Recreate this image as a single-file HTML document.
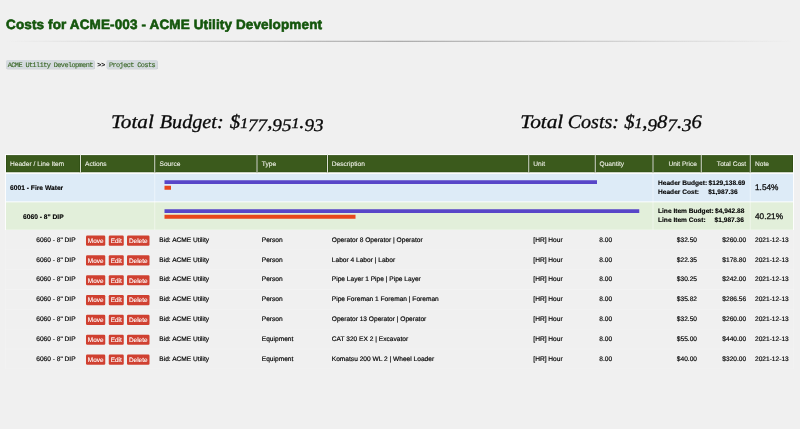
<!DOCTYPE html>
<html><head><meta charset="utf-8"><title>Costs</title>
<style>
html,body{margin:0;padding:0;}
body{width:800px;height:429px;overflow:hidden;background:#f0f0f0;font-family:"Liberation Sans",sans-serif;position:relative;text-rendering:geometricPrecision;will-change:transform;}
.a{position:absolute;white-space:nowrap;}
.t{font-size:26.4px;line-height:40px;color:#000;-webkit-text-stroke:0.72px #000;}
.th{font-size:26.4px;line-height:40px;color:#eef1e6;-webkit-text-stroke:0.4px #eef1e6;}
.b{font-weight:bold;font-size:26.72px;color:#000;-webkit-text-stroke:0.48px #000;}
.bb{font-size:26.4px;}
.r{text-align:right;}
.btn{position:absolute;height:40.8px;border-radius:4.8px;background:#d04030;color:#fff;font-size:25.6px;line-height:43.2px;text-align:center;-webkit-text-stroke:0.4px #fff;}
.crumb{position:absolute;top:240px;height:34.8px;background:#d5dadf;border-radius:6px;box-shadow:1.2px 1.6px 1.2px #b4b8bc;font-family:"Liberation Mono",monospace;font-size:27.6px;letter-spacing:-2.4px;line-height:34.8px;color:#3a6727;text-align:center;-webkit-text-stroke:0.56px #3a6727;}
.crumb span{position:relative;top:4.4px;}
.big{font-family:"Liberation Serif",serif;font-style:italic;color:#0a0a0a;line-height:96px;-webkit-text-stroke:1.32px #0a0a0a;}
.dx{font-size:0.75em;-webkit-text-stroke:1.6px #0a0a0a;}
.dd{position:relative;top:12.4px;font-size:0.92em;}
#wrap{position:absolute;left:0;top:0;width:3200px;height:1716px;transform:scale(0.25);transform-origin:0 0;}
</style></head><body><div id="wrap">
<div class="a" id="title" style="left:24px;top:61.6px;font-size:54px;line-height:72px;font-weight:bold;color:#14560c;-webkit-text-stroke:2.4px #14560c;letter-spacing:0.52px;">Costs for ACME-003 - ACME Utility Development</div>
<div class="a" style="left:24px;top:160px;width:3148px;height:4px;background:linear-gradient(to right,rgba(150,150,150,0),rgba(150,150,150,0.22) 50%,rgba(150,150,150,0));"></div>
<div class="a" style="left:24px;top:164px;width:3148px;height:4px;background:linear-gradient(to right,rgba(150,150,150,0),rgba(150,150,150,0.75) 50%,rgba(150,150,150,0));"></div>
<div class="crumb" style="left:24px;width:354px;"><span>ACME Utility Development</span></div>
<div class="a" style="left:389.2px;top:241.2px;font-size:27.6px;line-height:36px;color:#111;font-weight:bold;">&gt;&gt;</div>
<div class="crumb" style="left:426px;width:204px;"><span>Project Costs</span></div>

<div class="a big" id="w1" style="left:444.48px;top:437.2px;font-size:77.2px;transform:scaleX(1.0986);transform-origin:0 50%;">Total</div>
<div class="a big" id="w2" style="left:638.64px;top:437.2px;font-size:77.2px;transform:scaleX(1.0455);transform-origin:0 50%;">Budget:</div>
<div class="a big" id="w3" style="left:918.6px;top:437.2px;font-size:77.2px;transform:scaleX(1.0789);transform-origin:0 50%;">$<span class="dx">1</span><span class="dd">7</span><span class="dd">7</span>,<span class="dd">9</span><span class="dd">5</span><span class="dx">1</span>.<span class="dd">9</span><span class="dd">3</span></div>
<div class="a big" id="w4" style="left:2080.64px;top:437.2px;font-size:77.2px;transform:scaleX(1.1042);transform-origin:0 50%;">Total</div>
<div class="a big" id="w5" style="left:2271.36px;top:437.2px;font-size:77.2px;transform:scaleX(1.0374);transform-origin:0 50%;">Costs:</div>
<div class="a big" id="w6" style="left:2496.64px;top:437.2px;font-size:77.2px;transform:scaleX(1.072);transform-origin:0 50%;">$<span class="dx">1</span>,<span class="dd">9</span>8<span class="dd">7</span>.<span class="dd">3</span>6</div>
<div class="a" style="left:20px;top:616px;width:3156px;height:304px;background:#fdfdfd;"></div>
<div class="a" style="left:24px;top:621px;width:3148px;height:68px;background:#3b5a1c;box-shadow:inset 0 0 0 2.4px #2b4810;"></div>
<div class="a" style="left:318px;top:621px;width:8px;height:68px;background:#2b4810;"></div>
<div class="a" style="left:320px;top:618px;width:4px;height:75.2px;background:#dbe0d3;"></div>
<div class="a" style="left:615.2px;top:621px;width:8px;height:68px;background:#2b4810;"></div>
<div class="a" style="left:617.2px;top:618px;width:4px;height:75.2px;background:#dbe0d3;"></div>
<div class="a" style="left:1024px;top:621px;width:8px;height:68px;background:#2b4810;"></div>
<div class="a" style="left:1026px;top:618px;width:4px;height:75.2px;background:#dbe0d3;"></div>
<div class="a" style="left:1306px;top:621px;width:8px;height:68px;background:#2b4810;"></div>
<div class="a" style="left:1308px;top:618px;width:4px;height:75.2px;background:#dbe0d3;"></div>
<div class="a" style="left:2111.2px;top:621px;width:8px;height:68px;background:#2b4810;"></div>
<div class="a" style="left:2113.2px;top:618px;width:4px;height:75.2px;background:#dbe0d3;"></div>
<div class="a" style="left:2377.2px;top:621px;width:8px;height:68px;background:#2b4810;"></div>
<div class="a" style="left:2379.2px;top:618px;width:4px;height:75.2px;background:#dbe0d3;"></div>
<div class="a" style="left:2608px;top:621px;width:8px;height:68px;background:#2b4810;"></div>
<div class="a" style="left:2610px;top:618px;width:4px;height:75.2px;background:#dbe0d3;"></div>
<div class="a" style="left:2801.2px;top:621px;width:8px;height:68px;background:#2b4810;"></div>
<div class="a" style="left:2803.2px;top:618px;width:4px;height:75.2px;background:#dbe0d3;"></div>
<div class="a" style="left:2997.2px;top:621px;width:8px;height:68px;background:#2b4810;"></div>
<div class="a" style="left:2999.2px;top:618px;width:4px;height:75.2px;background:#dbe0d3;"></div>
<div class="a th" style="left:40px;top:633.4px;">Header / Line Item</div>
<div class="a th" style="left:340px;top:633.4px;">Actions</div>
<div class="a th" style="left:638px;top:633.4px;">Source</div>
<div class="a th" style="left:1047.2px;top:633.4px;">Type</div>
<div class="a th" style="left:1327.2px;top:633.4px;">Description</div>
<div class="a th" style="left:2133.2px;top:633.4px;">Unit</div>
<div class="a th" style="left:2398px;top:633.4px;">Quantity</div>
<div class="a th r" style="left:2548px;width:240px;top:633.4px;">Unit Price</div>
<div class="a th r" style="left:2744.8px;width:240px;top:633.4px;">Total Cost</div>
<div class="a th" style="left:3020px;top:633.4px;">Note</div>
<div class="a" style="left:24px;top:696px;width:3148px;height:110px;background:#ddebf7;"></div>
<div class="a" style="left:24px;top:808.8px;width:3148px;height:110.4px;background:#e2efda;"></div>
<div class="a t b" style="left:40px;top:728.8px;">6001 - Fire Water</div>
<div class="a t b" style="left:92px;top:844.8px;">6060 - 8" DIP</div>
<div class="a" style="left:617.2px;top:696px;width:4px;height:223.2px;background:rgba(255,255,255,0.45);"></div>
<div class="a" style="left:2610px;top:696px;width:4px;height:223.2px;background:rgba(255,255,255,0.45);"></div>
<div class="a" style="left:2999.2px;top:696px;width:4px;height:223.2px;background:rgba(255,255,255,0.45);"></div>
<div class="a" style="left:24px;top:805.6px;width:3148px;height:3.2px;background:rgba(255,255,255,0.5);"></div>
<div class="a" style="left:657.6px;top:720.8px;width:1730.4px;height:15.6px;background:#5846c8;"></div>
<div class="a" style="left:657.6px;top:743.2px;width:26.4px;height:16px;background:#e8471c;"></div>
<div class="a" style="left:657.6px;top:836.8px;width:1899.2px;height:15.6px;background:#5846c8;"></div>
<div class="a" style="left:657.6px;top:859.2px;width:764.4px;height:16px;background:#e8471c;"></div>
<div class="a t b bb" style="left:2632px;top:708.8px;">Header Budget:</div><div class="a t b bb" style="left:2834.4px;top:708.8px;">$129,138.69</div>
<div class="a t b bb" style="left:2632px;top:745.6px;">Header Cost:</div><div class="a t b bb" style="left:2832.8px;top:745.6px;">$1,987.36</div>
<div class="a t b bb" style="left:2632px;top:823.2px;">Line Item Budget:</div><div class="a t b bb" style="left:2860px;top:823.2px;">$4,942.88</div>
<div class="a t b bb" style="left:2632px;top:860.2px;">Line Item Cost:</div><div class="a t b bb" style="left:2858.4px;top:860.2px;">$1,987.36</div>
<div class="a" style="left:3020px;top:723.4px;font-size:33px;line-height:48px;color:#111;-webkit-text-stroke:1.2px #111;">1.54%</div>
<div class="a" style="left:3020px;top:842px;font-size:33px;line-height:48px;color:#111;-webkit-text-stroke:1.2px #111;">40.21%</div>
<div class="a" style="left:20.8px;top:997.72px;width:3154.4px;height:3.2px;background:rgba(255,255,255,0.2);"></div>
<div class="a" style="left:20.8px;top:1077.04px;width:3154.4px;height:3.2px;background:rgba(255,255,255,0.2);"></div>
<div class="a" style="left:20.8px;top:1156.36px;width:3154.4px;height:3.2px;background:rgba(255,255,255,0.2);"></div>
<div class="a" style="left:20.8px;top:1235.68px;width:3154.4px;height:3.2px;background:rgba(255,255,255,0.2);"></div>
<div class="a" style="left:20.8px;top:1315px;width:3154.4px;height:3.2px;background:rgba(255,255,255,0.2);"></div>
<div class="a" style="left:20.8px;top:1394.32px;width:3154.4px;height:3.2px;background:rgba(255,255,255,0.2);"></div>
<div class="a" style="left:20.8px;top:1473.64px;width:3154.4px;height:3.2px;background:rgba(255,255,255,0.2);"></div>
<div class="a" style="left:20.8px;top:920px;width:3.2px;height:555.2px;background:rgba(255,255,255,0.2);"></div>
<div class="a" style="left:3172px;top:920px;width:3.2px;height:555.2px;background:rgba(255,255,255,0.2);"></div>
<div class="a t r" style="left:24px;width:278.4px;top:937.2px;">6060 - 8" DIP</div>
<div class="btn" style="left:344px;width:77.2px;top:942px;">Move</div>
<div class="btn" style="left:434.8px;width:60px;top:942px;">Edit</div>
<div class="btn" style="left:508px;width:90px;top:942px;">Delete</div>
<div class="a t" style="left:637.2px;top:937.2px;">Bid: ACME Utility</div>
<div class="a t" style="left:1047.2px;top:937.2px;">Person</div>
<div class="a t" style="left:1327.2px;top:937.2px;">Operator 8 Operator | Operator</div>
<div class="a t" style="left:2133.2px;top:937.2px;">[HR] Hour</div>
<div class="a t" style="left:2397.2px;top:937.2px;">8.00</div>
<div class="a t r" style="left:2548px;width:240px;top:937.2px;">$32.50</div>
<div class="a t r" style="left:2744.8px;width:240px;top:937.2px;">$260.00</div>
<div class="a t" style="left:3020px;top:937.2px;">2021-12-13</div>
<div class="a t r" style="left:24px;width:278.4px;top:1016.52px;">6060 - 8" DIP</div>
<div class="btn" style="left:344px;width:77.2px;top:1021.32px;">Move</div>
<div class="btn" style="left:434.8px;width:60px;top:1021.32px;">Edit</div>
<div class="btn" style="left:508px;width:90px;top:1021.32px;">Delete</div>
<div class="a t" style="left:637.2px;top:1016.52px;">Bid: ACME Utility</div>
<div class="a t" style="left:1047.2px;top:1016.52px;">Person</div>
<div class="a t" style="left:1327.2px;top:1016.52px;">Labor 4 Labor | Labor</div>
<div class="a t" style="left:2133.2px;top:1016.52px;">[HR] Hour</div>
<div class="a t" style="left:2397.2px;top:1016.52px;">8.00</div>
<div class="a t r" style="left:2548px;width:240px;top:1016.52px;">$22.35</div>
<div class="a t r" style="left:2744.8px;width:240px;top:1016.52px;">$178.80</div>
<div class="a t" style="left:3020px;top:1016.52px;">2021-12-13</div>
<div class="a t r" style="left:24px;width:278.4px;top:1095.84px;">6060 - 8" DIP</div>
<div class="btn" style="left:344px;width:77.2px;top:1100.64px;">Move</div>
<div class="btn" style="left:434.8px;width:60px;top:1100.64px;">Edit</div>
<div class="btn" style="left:508px;width:90px;top:1100.64px;">Delete</div>
<div class="a t" style="left:637.2px;top:1095.84px;">Bid: ACME Utility</div>
<div class="a t" style="left:1047.2px;top:1095.84px;">Person</div>
<div class="a t" style="left:1327.2px;top:1095.84px;">Pipe Layer 1 Pipe | Pipe Layer</div>
<div class="a t" style="left:2133.2px;top:1095.84px;">[HR] Hour</div>
<div class="a t" style="left:2397.2px;top:1095.84px;">8.00</div>
<div class="a t r" style="left:2548px;width:240px;top:1095.84px;">$30.25</div>
<div class="a t r" style="left:2744.8px;width:240px;top:1095.84px;">$242.00</div>
<div class="a t" style="left:3020px;top:1095.84px;">2021-12-13</div>
<div class="a t r" style="left:24px;width:278.4px;top:1175.16px;">6060 - 8" DIP</div>
<div class="btn" style="left:344px;width:77.2px;top:1179.96px;">Move</div>
<div class="btn" style="left:434.8px;width:60px;top:1179.96px;">Edit</div>
<div class="btn" style="left:508px;width:90px;top:1179.96px;">Delete</div>
<div class="a t" style="left:637.2px;top:1175.16px;">Bid: ACME Utility</div>
<div class="a t" style="left:1047.2px;top:1175.16px;">Person</div>
<div class="a t" style="left:1327.2px;top:1175.16px;">Pipe Foreman 1 Foreman | Foreman</div>
<div class="a t" style="left:2133.2px;top:1175.16px;">[HR] Hour</div>
<div class="a t" style="left:2397.2px;top:1175.16px;">8.00</div>
<div class="a t r" style="left:2548px;width:240px;top:1175.16px;">$35.82</div>
<div class="a t r" style="left:2744.8px;width:240px;top:1175.16px;">$286.56</div>
<div class="a t" style="left:3020px;top:1175.16px;">2021-12-13</div>
<div class="a t r" style="left:24px;width:278.4px;top:1254.48px;">6060 - 8" DIP</div>
<div class="btn" style="left:344px;width:77.2px;top:1259.28px;">Move</div>
<div class="btn" style="left:434.8px;width:60px;top:1259.28px;">Edit</div>
<div class="btn" style="left:508px;width:90px;top:1259.28px;">Delete</div>
<div class="a t" style="left:637.2px;top:1254.48px;">Bid: ACME Utility</div>
<div class="a t" style="left:1047.2px;top:1254.48px;">Person</div>
<div class="a t" style="left:1327.2px;top:1254.48px;">Operator 13 Operator | Operator</div>
<div class="a t" style="left:2133.2px;top:1254.48px;">[HR] Hour</div>
<div class="a t" style="left:2397.2px;top:1254.48px;">8.00</div>
<div class="a t r" style="left:2548px;width:240px;top:1254.48px;">$32.50</div>
<div class="a t r" style="left:2744.8px;width:240px;top:1254.48px;">$260.00</div>
<div class="a t" style="left:3020px;top:1254.48px;">2021-12-13</div>
<div class="a t r" style="left:24px;width:278.4px;top:1333.8px;">6060 - 8" DIP</div>
<div class="btn" style="left:344px;width:77.2px;top:1338.6px;">Move</div>
<div class="btn" style="left:434.8px;width:60px;top:1338.6px;">Edit</div>
<div class="btn" style="left:508px;width:90px;top:1338.6px;">Delete</div>
<div class="a t" style="left:637.2px;top:1333.8px;">Bid: ACME Utility</div>
<div class="a t" style="left:1047.2px;top:1333.8px;">Equipment</div>
<div class="a t" style="left:1327.2px;top:1333.8px;">CAT 320 EX 2 | Excavator</div>
<div class="a t" style="left:2133.2px;top:1333.8px;">[HR] Hour</div>
<div class="a t" style="left:2397.2px;top:1333.8px;">8.00</div>
<div class="a t r" style="left:2548px;width:240px;top:1333.8px;">$55.00</div>
<div class="a t r" style="left:2744.8px;width:240px;top:1333.8px;">$440.00</div>
<div class="a t" style="left:3020px;top:1333.8px;">2021-12-13</div>
<div class="a t r" style="left:24px;width:278.4px;top:1413.12px;">6060 - 8" DIP</div>
<div class="btn" style="left:344px;width:77.2px;top:1417.92px;">Move</div>
<div class="btn" style="left:434.8px;width:60px;top:1417.92px;">Edit</div>
<div class="btn" style="left:508px;width:90px;top:1417.92px;">Delete</div>
<div class="a t" style="left:637.2px;top:1413.12px;">Bid: ACME Utility</div>
<div class="a t" style="left:1047.2px;top:1413.12px;">Equipment</div>
<div class="a t" style="left:1327.2px;top:1413.12px;">Komatsu 200 WL 2 | Wheel Loader</div>
<div class="a t" style="left:2133.2px;top:1413.12px;">[HR] Hour</div>
<div class="a t" style="left:2397.2px;top:1413.12px;">8.00</div>
<div class="a t r" style="left:2548px;width:240px;top:1413.12px;">$40.00</div>
<div class="a t r" style="left:2744.8px;width:240px;top:1413.12px;">$320.00</div>
<div class="a t" style="left:3020px;top:1413.12px;">2021-12-13</div>
</div></body></html>
